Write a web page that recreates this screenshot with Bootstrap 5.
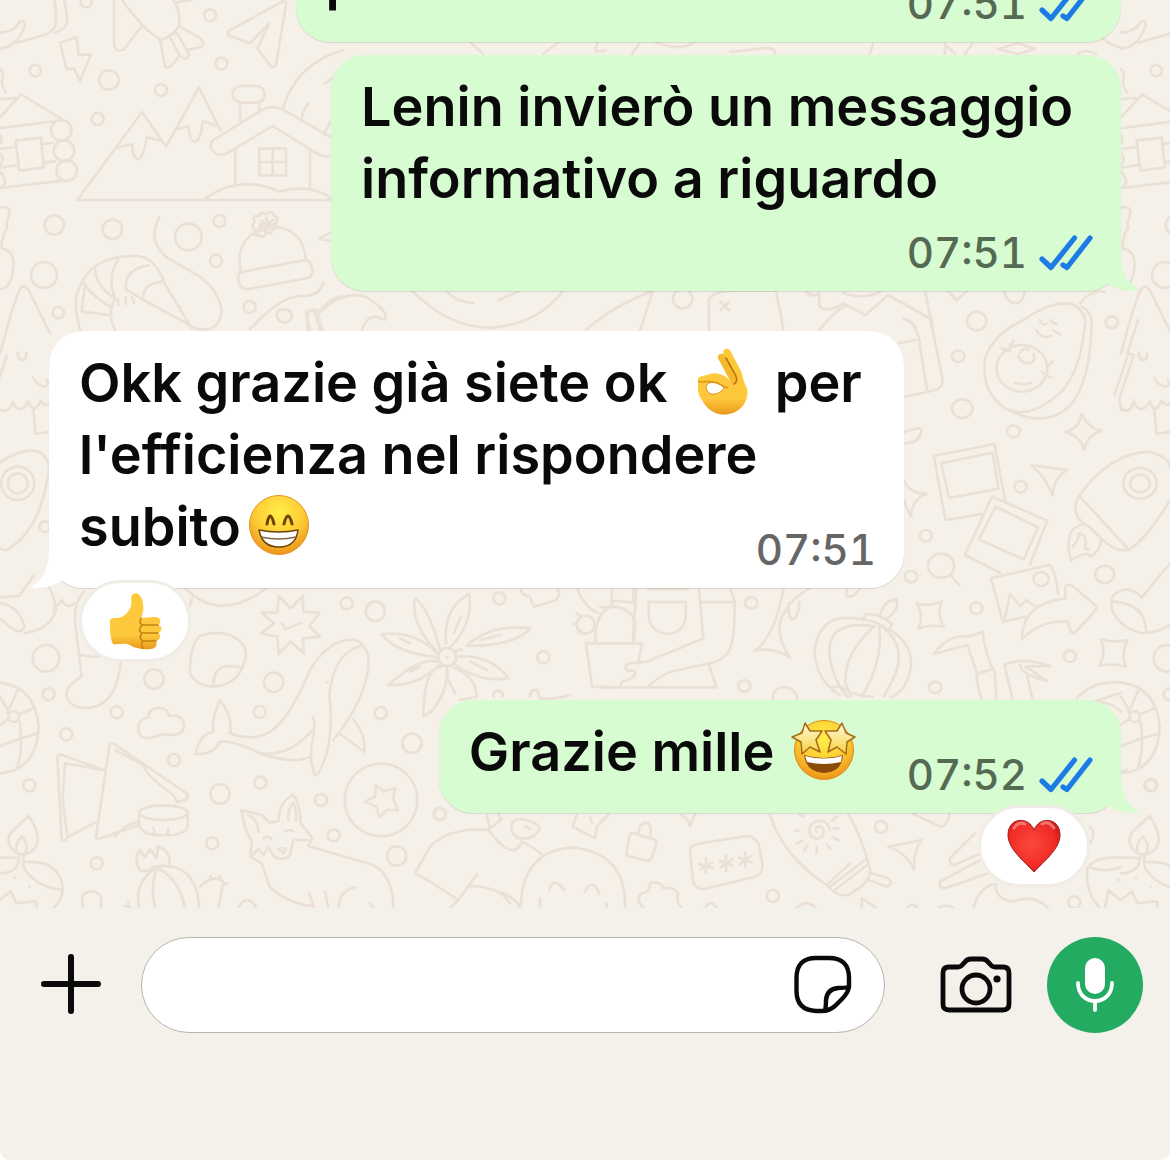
<!DOCTYPE html>
<html lang="it">
<head>
<meta charset="utf-8">
<meta name="viewport" content="width=device-width, initial-scale=1">
<title>Chat</title>
<link href="https://cdn.jsdelivr.net/npm/bootstrap@5.3.0/dist/css/bootstrap.min.css" rel="stylesheet">
<style>
  body { font-family: Inter, "Liberation Sans", sans-serif; background: #fff; color: #0a0a0a; }
  .app-shell { background: #f4f0ea; border-radius: 0 0 10px 10px; height: 100vh; }
  .chat-log { background: #f5f0e8; padding: 0 49px 95px; min-height: 0; }
  .doodles { z-index: 0; fill: none; stroke: #eae0d5; stroke-width: 2.6px; stroke-linecap: round; stroke-linejoin: round; }
  .doodles * { vector-effect: non-scaling-stroke; }
  .bubble { z-index: 1; border-radius: 34px; padding: 16px 28px 13px 30px; box-shadow: 0 1px 1px rgba(60, 50, 40, .14); }
  .bubble-out { background: #d8fcd2; --bubble: #d8fcd2; }
  .bubble-in { background: #fff; --bubble: #fff; }
  .bubble-text { font-size: 54px; line-height: 72px; font-weight: 600; }
  .stamp { font-size: 42px; line-height: 50px; font-weight: 500; font-variant-numeric: tabular-nums; margin-top: -38px; gap: 12px; color: #666; }
  .bubble-out .stamp { color: #566a53; }
  .stamp-below { margin-top: 13px; }
  .stamp-room { width: 237px; }
  .tail { width: 42px; height: 42px; bottom: -1px; fill: var(--bubble); }
  .tail-out { right: -21px; }
  .tail-in { left: -21px; }
  .emoji { width: 68px; height: 68px; vertical-align: -14px; }
  .bubble-text .emoji-inline { margin: 0 4px 0 8px; }
  .reaction { width: 112px; height: 82px; border: 3px solid #f0ece6; z-index: 2; bottom: -74px; }
  .reaction .emoji { width: 60px; height: 60px; }
  .reaction-start { left: 30px; }
  .reaction-end { right: 31px; }
  .w-first { width: 77%; }
  .w-second { width: 790px; max-width: 100%; }
  .w-third { width: 855px; max-width: 100%; }
  .gap-tight { margin-top: 13px; }
  .gap-turn { margin-top: 40px; }
  .gap-reacted { margin-top: 112px; }
  .composer { padding: 29px 27px 127px 39px; }
  .plain-btn { border: 0; background: none; padding: 0; line-height: 0; color: #0a0a0a; }
  .field-wrap { margin-left: 38px; margin-right: 55px; }
  .field { height: 96px; border: 1px solid #b9b6b2; border-radius: 48px; font-size: 42px; padding: 0 110px 0 36px; }
  .sticker-btn { right: 32px; top: 17px; }
  .mic-btn { width: 96px; height: 96px; background: #23ab62; margin-left: 35px; }
</style>
<script src="https://cdn.jsdelivr.net/npm/bootstrap@5.3.0/dist/js/bootstrap.bundle.min.js"></script>
</head>
<body>
<svg width="0" height="0" class="position-absolute" aria-hidden="true">
  <defs>
    <radialGradient id="face" cx=".5" cy=".3" r=".75"><stop offset="0" stop-color="#fff04a"/><stop offset=".55" stop-color="#fdcb33"/><stop offset="1" stop-color="#e98a17"/></radialGradient>
    <linearGradient id="skin" x1="0" y1="0" x2="0" y2="1"><stop offset="0" stop-color="#fdc93a"/><stop offset=".75" stop-color="#fec83d"/><stop offset="1" stop-color="#e89a1c"/></linearGradient>
    <linearGradient id="starfill" x1="0" y1="0" x2="0" y2="1"><stop offset="0" stop-color="#fffbe0"/><stop offset="1" stop-color="#f6cf3c"/></linearGradient>
    <radialGradient id="heartfill" cx=".45" cy=".45" r=".65"><stop offset="0" stop-color="#fb4a3c"/><stop offset=".7" stop-color="#f02a25"/><stop offset="1" stop-color="#b81417"/></radialGradient>
    <symbol id="ticks" viewBox="0 0 54 36"><path d="M3 24l9 8.500L35.500 3M24 30l4 2.500L51 3" fill="none" stroke="#1b7ce5" stroke-width="5.200" stroke-linecap="round" stroke-linejoin="round"/></symbol>
    <symbol id="tail-right" viewBox="0 0 42 42"><path d="M21 0C21 22 27 33 40 40.500C28 42 15 39 7 33L0 16Z"/></symbol>
    <symbol id="tail-left" viewBox="0 0 42 42"><path d="M21 0C21 22 15 33 2 40.500C14 42 27 39 35 33L42 16Z"/></symbol>
  </defs>
</svg>

<div class="app-shell d-flex flex-column overflow-hidden">
  <main class="chat-log position-relative flex-grow-1 d-flex flex-column justify-content-end overflow-hidden">

    <!-- wallpaper doodles -->
    <svg class="doodles position-absolute top-0 start-0 w-100 h-100" viewBox="0 0 1170 908" preserveAspectRatio="xMinYMin slice" aria-hidden="true">
      <g id="edge-doodles">
        <g transform="scale(.33333)">
          <path d="M163 0Q172 40 166 75Q160 97 130 106L52 128M192 0Q206 60 198 75Q190 90 163 98M0 98Q45 95 58 66Q76 58 74 76Q55 140 0 146"/>
          <path d="M0 208Q12 215 8 235Q0 250 18 278M0 352L63 283L190 360L0 385M0 297L45 294M0 447L47 440M124 432L158 429M0 503L52 495M132 487L165 484M0 564L190 542M47 422L122 413L132 502L58 512Z"/>
          <circle cx="184" cy="391" r="31"/><circle cx="192" cy="452" r="31"/><circle cx="200" cy="512" r="31"/>
          <path d="M0 404Q8 420 0 430M0 460Q16 476 0 496M0 515Q18 535 14 550Q8 562 0 563M0 622Q28 618 28 636Q28 650 22 660Q18 670 22 684Q8 700 10 714Q2 725 6 746Q40 750 41 792Q35 868 0 868"/>
          <circle cx="106" cy="212" r="17"/><circle cx="163" cy="675" r="29"/><circle cx="132" cy="825" r="39"/><circle cx="175" cy="938" r="17"/>
        </g>
        <g transform="translate(0 320) scale(.33333)">
          <path d="M28 0L0 100M35 -25L58 -90Q70 -110 86 -90L150 40M35 -25L28 0M54 98Q52 118 68 120Q82 116 78 100M100 172Q108 195 135 200Q150 195 140 178M20 108L-20 225M0 270Q30 280 38 246Q60 290 86 244Q100 290 122 242Q135 262 150 250M100 265L106 342L150 335"/>
        </g>
        <g transform="translate(0 580) scale(.33333)">
          <circle cx="138" cy="235" r="40"/><circle cx="146" cy="343" r="18"/><circle cx="88" cy="616" r="18"/>
          <path d="M0 308Q105 320 116 440Q110 572 0 580M0 350L25 392M56 404L98 386M0 434L24 418M58 424Q72 500 50 568M0 498Q60 475 114 460M22 398L52 332"/><circle cx="41" cy="410" r="16"/>
          <path d="M86 708Q125 765 108 800Q95 820 74 822Q50 824 38 810Q12 780 40 750ZM66 770Q90 800 74 822M66 770Q40 795 52 820M58 824Q58 845 48 862Q30 880 0 880M72 824Q66 848 74 868Q110 922 188 930M76 846Q176 840 188 920Q190 960 160 984M0 832L50 834M0 960L32 934L50 970L108 964L110 984M44 893h1M88 920h1"/>
        </g>
      </g>
      <use href="#edge-doodles" x="1121"/>

      <g transform="translate(0 320) scale(.33333)">
        <path d="M0 428Q70 380 118 396Q160 420 140 490Q110 640 20 690Q5 690 0 684M0 832L58 828L100 768"/>
        <circle cx="53" cy="490" r="50"/><circle cx="53" cy="490" r="30"/><circle cx="134" cy="620" r="16"/>
        <path d="M0 848Q60 860 74 922Q60 955 0 895M74 940Q150 930 168 870Q162 820 140 790"/>
      </g>

      <g transform="scale(.33333)">
        <circle cx="259" cy="5" r="17"/><circle cx="327" cy="240" r="29"/><circle cx="483" cy="270" r="18"/><circle cx="293" cy="357" r="18"/><circle cx="630" cy="46" r="18"/><circle cx="664" cy="191" r="18"/><circle cx="337" cy="688" r="29"/><circle cx="565" cy="711" r="40"/><circle cx="658" cy="663" r="18"/><circle cx="648" cy="782" r="18"/><circle cx="749" cy="921" r="18"/>
        <path d="M180 128L230 112L236 166L274 162L240 242L222 205L200 207Z"/>
        <path d="M342 0V136Q350 158 372 148L424 80M366 0Q430 90 480 118Q505 120 536 80Q545 40 520 0M524 8L575 0M480 118L495 200Q508 212 534 172M508 108L540 168Q560 185 567 164L534 102Q520 98 508 108M540 80L602 115Q622 140 590 144L562 150"/>
        <path d="M684 94L848 4Q860 2 858 14L828 194Q820 208 810 196L772 146L808 70L750 130L684 106Z"/>
        <path d="M232 600L426 336L498 440L597 262L662 392M348 444L396 432Q398 475 414 478Q432 470 440 412L486 424M530 388L566 378Q568 425 586 426Q604 415 608 364L646 376M232 600H996M616 596Q720 520 838 575Q930 550 992 594M706 448V550M930 448V568M640 420L790 328Q818 314 848 328L990 410M818 378L680 460Q645 475 632 440Q632 425 640 420M818 378L950 460Q975 475 992 466M720 362V310M778 332V310M778 446H858V526H778ZM818 446V526M778 486H858"/>
        <rect x="698" y="258" width="96" height="50" rx="25"/>
        <path d="M850 322Q890 190 1030 150M975 250L1000 232M926 310Q908 330 905 355M990 365L972 404M992 698L958 716L992 722"/>
        <path d="M722 816Q700 690 830 682Q910 690 918 780M714 830Q716 818 730 815L915 780Q935 780 938 815Q935 832 920 835L740 868Q716 866 714 830"/>
        <path d="M776 706Q756 708 768 690Q748 682 764 666Q752 646 776 648Q784 630 798 644Q818 626 822 648Q842 654 826 668Q840 686 818 686Q818 706 800 696Q792 718 776 706M785 662L812 684M800 654L794 694M820 660L778 684M780 674H826"/>
        <path d="M478 652Q440 720 500 772L600 830Q665 880 664 940Q655 985 620 988Q580 990 560 970L430 900Q425 850 490 844L575 985M490 840Q460 760 390 768Q270 775 240 860Q215 900 240 988L262 1030M255 850L245 935L325 945M250 850Q280 890 330 920M285 808Q290 860 345 895M355 778Q320 830 345 895M445 796Q370 810 378 868L428 898M345 895Q320 940 345 990M352 896L356 915M376 892L378 912M396 892L402 908M540 920h2"/>
        <path d="M750 988Q840 890 900 888Q960 890 970 848M830 945Q830 928 852 928Q876 930 876 948Q872 968 852 968Q832 964 830 945M918 940Q920 930 942 932L960 988M918 940L930 988M955 940Q990 890 1030 890"/>
      </g>

      <path d="M470 42L483 54M543 54L559 42M598 42Q590 55 606 50M640 42Q635 50 632 54M655 42Q680 52 695 42M730 52L768 48Q775 48 775 54M870 54L873 44M945 54V44L955 54M965 54L972 44M998 49L1018 43L1035 49L1018 54ZM1078 54Q1085 48 1096 54M1100 36Q1108 44 1121 48"/>

      <g transform="translate(0 250) scale(.74617 .33333)">
        <path d="M552 122Q600 230 655 234Q720 225 755 122M600 128Q615 160 635 158M668 150L698 122M785 240Q820 170 875 122L858 240M950 240V150Q955 122 985 122H1040L1050 240M966 155L977 180M977 155L966 180M1080 125Q1090 145 1098 130V170Q1110 190 1130 160L1160 195L1190 135L1250 210M1098 240Q1120 180 1135 165M1130 130Q1160 150 1180 125M1210 205Q1228 220 1228 240M1240 122L1250 240M1270 122L1282 150L1296 122M1345 122Q1350 160 1362 160Q1372 155 1373 125M1448 160Q1460 120 1480 125M412 190V240M412 190Q415 178 425 180L432 240M430 185Q460 120 490 140Q525 190 515 210Q495 180 485 240"/>
        <ellipse cx="915" cy="146" rx="13" ry="29"/><ellipse cx="1309" cy="213" rx="13" ry="28"/><ellipse cx="1490" cy="217" rx="8" ry="18"/>
      </g>

      <g transform="translate(600 320) scale(.36364 .33333)">
        <circle cx="985" cy="109" r="17"/><circle cx="996" cy="266" r="28"/><circle cx="1137" cy="334" r="18"/><circle cx="1157" cy="500" r="17"/><circle cx="896" cy="647" r="17"/><circle cx="855" cy="770" r="17"/><circle cx="1388" cy="763" r="26"/><circle cx="1035" cy="865" r="17"/><circle cx="1292" cy="1009" r="17"/><circle cx="922" cy="1102" r="17"/><circle cx="416" cy="849" r="17"/><circle cx="397" cy="1098" r="17"/>
        <path d="M850 0Q880 40 880 80L900 215M820 70L868 60M910 0L942 180Q942 208 915 212L838 230M838 335Q890 318 884 330Q880 370 838 370M838 485Q850 518 898 522Q860 535 855 588Q840 560 838 540"/>
        <path d="M1165 0Q1085 40 1060 110Q1045 210 1110 262Q1170 300 1240 240Q1320 190 1335 0Q1320 -50 1280 -50Q1230 -50 1165 0M1110 262Q1220 330 1290 260Q1350 190 1352 0Q1345 -30 1325 -40M1200 30Q1215 60 1240 48M1210 0Q1215 20 1230 10M1245 30L1266 44M1238 0Q1245 12 1256 10M1150 108Q1160 135 1185 128Q1200 120 1192 102M1155 98Q1165 80 1180 90M1140 188Q1165 198 1185 188M1105 85L1125 95L1128 75L1138 62M1228 140L1245 125M1215 155Q1230 170 1240 172"/>
        <circle cx="1160" cy="145" r="70"/>
        <path d="M1325 282Q1340 325 1380 332Q1338 345 1332 390Q1318 345 1280 336Q1318 325 1325 282ZM1186 436L1285 450Q1250 470 1244 525Q1225 470 1186 436ZM870 850Q905 862 940 845Q925 880 946 920Q905 912 876 926Q892 885 870 850ZM1378 958Q1415 970 1450 960Q1432 1000 1446 1040Q1408 1028 1374 1038Q1392 1000 1378 958Z"/>
        <path d="M918 408L1085 372L1115 545M918 408L950 600L1050 582M938 430L1080 398L1096 506L960 534ZM1078 530L1230 602L1182 735M1078 530L1003 705L1100 758M1088 560L1205 622L1165 718L1042 658Z"/>
        <path d="M1315 530Q1400 400 1510 395Q1570 410 1568 450M1320 530L1455 690M1315 530Q1290 590 1345 620L1378 655Q1420 700 1455 688Q1500 660 1568 540M1335 612Q1290 620 1290 660Q1285 680 1295 722Q1340 690 1350 710Q1385 680 1375 650M1300 680Q1320 655 1315 640Q1340 645 1335 670Q1330 690 1345 688"/>
        <circle cx="1485" cy="490" r="46"/><circle cx="1485" cy="490" r="27"/>
        <path d="M1480 0L1450 100L1468 105L1430 230Q1425 280 1455 270Q1465 260 1468 240"/>
        <circle cx="938" cy="737" r="36"/><path d="M964 765L988 796M1075 775L1235 735Q1250 740 1260 822M1075 775L1108 905L1170 890M1112 900L1128 822L1155 858L1172 840L1200 862M1280 800Q1290 790 1300 798L1365 858Q1368 868 1355 880L1305 940Q1290 940 1288 905Q1210 900 1160 958Q1160 850 1280 835Z"/><circle cx="1213" cy="777" r="21"/>
        <path d="M1568 730L1490 832Q1450 790 1412 825Q1400 850 1412 880Q1440 930 1495 940Q1540 935 1568 915M1412 845Q1500 850 1502 935"/>
        <path d="M730 882Q770 880 802 912L795 932Q760 900 724 900ZM770 888Q780 840 815 838Q825 865 790 895M720 898Q600 870 590 1000Q595 1080 660 1125M750 918Q620 900 632 1010Q640 1080 680 1130M755 918Q670 1000 675 1090L690 1130M768 920Q780 1020 720 1130M775 920Q850 980 805 1080L780 1130M800 930Q880 990 845 1080Q830 1120 800 1132M640 1115Q630 1098 660 1100Q700 1130 750 1130"/>
        <path d="M918 1002Q960 940 1015 950L1052 935Q1060 1010 1085 1055L1090 1140M918 1002L1010 975L1035 1055Q1035 1090 1050 1140M1035 1062L1080 1048M1112 1035Q1160 1010 1238 1038L1170 1040L1228 1082Q1160 1065 1155 1035M1112 1035L1135 1140M1175 1070L1190 1140"/>
        <path d="M134 846H236V890Q230 940 184 942Q138 935 134 890ZM132 808H242M100 806L90 965M272 806L284 955L130 1025M358 806L372 846H275M370 848Q372 970 350 1000Q330 1025 300 1030L195 1055Q160 1070 130 1102M0 970H116L105 1030M0 1102H320L300 1035M130 1025L80 1030Q60 1045 78 1052Q95 1050 98 1060Q90 1080 60 1085L55 1102M0 862Q95 850 97 920L92 965"/>
        <path d="M505 806Q480 950 426 992Q480 980 522 1014Q480 940 500 890Q530 830 575 806M520 850Q515 885 528 900Q548 890 548 845M680 806Q670 840 700 825L715 806"/>
        <path d="M475 1140Q475 1100 510 1102Q540 1105 542 1140"/>
      </g>

      <g transform="translate(0 580) scale(.33333)">
        <circle cx="462" cy="297" r="29"/><circle cx="350" cy="397" r="18"/><circle cx="199" cy="463" r="18"/><circle cx="522" cy="540" r="18"/><circle cx="821" cy="307" r="29"/><circle cx="779" cy="396" r="18"/><circle cx="1040" cy="70" r="18"/><circle cx="1126" cy="94" r="29"/><circle cx="1142" cy="399" r="18"/><circle cx="1236" cy="490" r="29"/><circle cx="660" cy="642" r="29"/><circle cx="781" cy="608" r="18"/><circle cx="963" cy="660" r="18"/><circle cx="1001" cy="766" r="18"/><circle cx="1190" cy="828" r="29"/><circle cx="1320" cy="702" r="18"/><circle cx="637" cy="790" r="18"/><circle cx="290" cy="850" r="18"/><circle cx="1143" cy="660" r="109"/>
        <path d="M250 984Q235 935 275 934Q315 940 300 984M715 984Q740 935 770 984"/>
        <path d="M160 90L185 60Q200 90 225 70M250 35Q215 80 228 150L245 290Q190 320 202 355Q220 395 285 380Q350 360 362 250M238 225Q290 235 300 225M570 75L576 55M555 24Q660 130 800 24"/>
        <path d="M598 170Q640 150 690 165Q735 185 738 220Q735 260 710 290Q680 320 640 320Q590 318 570 280Q568 200 598 170M640 320Q640 260 685 258L728 262"/>
        <path d="M836 48L872 85L908 48L910 95L958 98L928 138L960 170L908 175L912 220L872 185L836 222L832 170L784 160L822 130L784 98L832 98ZM845 128L855 148L905 128"/>
        <path d="M586 522Q600 460 640 456Q635 410 660 362Q700 410 690 460Q740 480 790 466Q860 440 930 270Q990 170 1070 180Q1120 210 1100 290Q1080 380 1000 480M586 522Q640 525 660 485Q700 480 780 520Q880 555 930 530M780 520Q870 530 938 450M938 410Q950 430 938 480Q925 540 945 585Q960 585 980 520Q1000 440 988 345Q1000 220 1082 198M1060 418Q1100 470 1092 515Q1060 490 1020 462M982 308h1"/>
        <path d="M418 462Q405 420 445 412Q445 385 478 384Q505 385 508 408Q545 400 552 435Q550 470 505 464Q490 460 460 472Q430 480 418 462"/>
        <path d="M172 530Q175 522 185 524L310 570L195 550L188 660L202 770Q200 785 185 780L172 530M290 725L202 772M328 498Q332 486 345 494L560 640Q570 650 555 660L530 666L520 645Q440 590 430 555L345 510M328 498L288 770Q290 778 302 775L418 735M345 770Q370 735 415 725"/>
        <ellipse cx="490" cy="698" rx="73" ry="22"/><path d="M417 700V735Q430 768 480 765Q560 770 563 735V700M460 745L465 762M505 745L503 762"/>
        <path d="M420 870Q400 840 418 810L436 832L450 808L470 835L474 798Q515 815 508 855M420 870Q440 880 460 860Q590 840 598 984M465 865Q400 910 418 984M470 865Q450 920 465 984M475 865Q540 900 555 984M600 920Q640 880 670 905L655 984M632 888V896M660 888V896M670 914L682 910M372 978L395 984M385 968V984"/>
        <path d="M725 690L785 705L808 728L835 722Q840 660 880 645Q900 670 902 730L938 775L925 798L1120 855Q1180 890 1180 984M725 690Q735 760 755 780L752 830L785 850L808 918Q860 970 935 978M745 705Q775 720 775 755M865 720Q865 680 880 668Q890 690 888 722M755 830L775 805L790 825L805 800L822 830Q850 845 870 825L880 780L925 780M790 775Q805 765 815 778M855 755Q870 745 880 755M835 808Q855 800 858 808L850 820ZM928 940L942 984M975 935L985 984M1015 984Q1020 930 1065 922M1120 984L1110 970"/>
        <path d="M1128 616L1150 634L1185 625L1180 655L1194 690L1160 690L1138 712L1128 680L1095 665L1125 650Z"/>
      </g>

      <g transform="translate(430 580) scale(.33333)">
        <circle cx="208" cy="55" r="18"/><circle cx="340" cy="232" r="18"/><circle cx="52" cy="231" r="27"/><circle cx="29" cy="702" r="18"/><circle cx="1028" cy="948" r="18"/><circle cx="467" cy="134" r="27"/>
        <path d="M48 190Q40 80 118 42Q130 130 62 200M110 198Q180 130 302 145Q250 200 110 198M76 230Q180 220 235 295Q150 310 70 250M65 260Q140 290 140 350L90 360M52 262Q60 320 0 400M25 245Q-30 230 -125 315Q-40 320 30 255M40 258Q-20 260 -20 410Q50 370 52 262M30 210Q0 90 -45 55Q-60 130 20 215M25 225Q-40 150 -145 163Q-100 220 25 232M72 160L92 110M150 180L210 165M120 245L170 270M50 290L75 340M-60 190L-90 175M-60 275L-30 260M50 231h1M75 215L95 208"/>
        <path d="M272 30Q280 50 298 48L312 80L380 60Q392 40 382 24M442 24Q460 80 502 98M545 24V75M610 24V68L548 62M190 350Q190 330 205 332Q220 335 218 350M300 350Q300 325 322 330L330 355Q370 360 420 345M468 190L486 320L570 322M440 100L452 108M432 132H440M445 160L455 152M468 190H515M495 190Q495 80 560 78"/>
        <path d="M0 800Q60 740 175 750Q250 850 275 785Q310 800 340 828M0 800L-45 880L0 905M170 705L180 745L215 718L205 702M245 735Q250 710 290 720Q330 730 328 750Q310 780 265 775Q240 760 245 735M285 740L300 746M440 705L428 740L495 775L500 740L535 705M480 712L486 728M0 905L85 960L142 882M85 960L60 984M122 918Q210 920 240 970M205 935Q245 945 270 980M272 984Q275 810 430 803Q590 820 585 984M358 930Q370 885 402 930M465 935Q485 890 508 940M330 955V984M530 970V984M755 705Q775 715 780 738L795 702"/>
        <path d="M598 768Q600 758 612 760L670 778Q682 780 678 792L665 835Q660 844 648 842L595 828Q588 824 590 815ZM625 762Q628 728 650 728Q668 735 660 775"/>
        <path d="M780 820Q778 798 800 792L950 768Q980 770 988 800L998 860Q995 885 970 892L820 928Q795 925 790 905ZM828 835V880M808 852L848 864M812 868L846 848M888 826V872M868 842L908 856M872 862L906 838M945 818V862M925 832L965 848M928 854L962 828"/>
        <path d="M640 984Q615 955 635 940Q660 940 660 910Q690 900 700 925Q730 920 745 940Q735 965 755 984M1020 705Q1060 830 1190 915M825 984Q840 955 860 984M1100 984Q1130 955 1158 984M1190 915L1260 850M1190 915Q1220 950 1250 945"/>
        <path d="M1160 755Q1150 745 1168 738Q1188 745 1178 768Q1160 785 1142 768Q1130 740 1155 725Q1190 715 1200 750M1120 710L1110 704M1108 752H1095M1118 782L1100 790M1132 796L1122 812M1160 802V818M1192 794L1202 808M1208 772L1225 780M1210 745H1225M1205 722L1220 710"/>
      </g>

      <g transform="translate(780 680) scale(.33333)">
        <circle cx="303" cy="441" r="18"/><circle cx="883" cy="667" r="18"/><circle cx="1114" cy="315" r="18"/>
        <path d="M205 402Q250 480 270 570Q272 610 205 645M150 620L255 540M165 630L262 555M275 580L325 595Q340 612 322 620L265 600M222 632L240 622M325 500L425 480Q400 510 402 568Q375 515 325 500M400 402L482 440Q500 440 508 404M585 460L510 535Q505 555 525 555L600 520M600 540L480 605Q475 625 495 625L625 580M580 684Q600 615 650 612M645 615Q650 660 700 665Q760 640 805 684M245 684L246 655L290 684M380 684Q400 665 412 684M475 684Q500 670 520 684M930 440Q950 460 930 490"/>
        <path d="M890 55Q940 0 1023 8M905 75Q960 60 1023 38M960 65Q1000 70 1023 95M1023 532Q950 530 925 560Q970 580 1023 562M922 565Q915 640 960 684M975 684L985 632L1023 660M1016 600h1M1023 275L1040 270"/>
      </g>
    </svg>

    <article class="bubble bubble-out w-first position-relative align-self-end d-flex flex-column flex-shrink-0">
      <div class="bubble-text">presenza</div>
      <div class="stamp d-flex align-items-center align-self-end"><time>07:51</time><svg width="54" height="36" role="img" aria-label="Letto"><use href="#ticks"/></svg></div>
    </article>

    <article class="bubble bubble-out w-second gap-tight position-relative align-self-end d-flex flex-column flex-shrink-0">
      <div class="bubble-text">Lenin invierò un messaggio informativo a riguardo</div>
      <div class="stamp stamp-below d-flex align-items-center align-self-end"><time>07:51</time><svg width="54" height="36" role="img" aria-label="Letto"><use href="#ticks"/></svg></div>
      <svg class="tail tail-out position-absolute" aria-hidden="true"><use href="#tail-right"/></svg>
    </article>

    <article class="bubble bubble-in w-third gap-turn position-relative align-self-start d-flex flex-column flex-shrink-0">
      <svg class="tail tail-in position-absolute" aria-hidden="true"><use href="#tail-left"/></svg>
      <div class="bubble-text">Okk grazie già siete ok
        <svg class="emoji emoji-inline" viewBox="0 0 68 68" role="img" aria-label="OK">
          <path d="M9 33C8 27 17 28 21 26C31 23 40 30 42 35L29 10C28 6 34 4 36 8L34 5C34 0 40-1 42 4L52 23C54 29 54 32 57 38C62 48 54 64 40 66C28 69 17 61 13 52C8 46 9 38 9 33Z" fill="url(#skin)"/>
          <path d="M29 10C28 6 34 4 36 8L47 29C49 34 47 37 44 37Z" fill="#f5b92c"/>
          <path d="M37 10L47 28Q49 34 45 36" fill="none" stroke="#b87310" stroke-width="1.600" stroke-linecap="round"/>
          <path d="M20 35C15 37 17 44 22 46C28 47 34 43 35 40C33 37 27 33 20 35Z" fill="#fff" stroke="#d88f16" stroke-width="1"/>
          <path d="M9 33C13 36 17 32 23 34C29 33 33 39 39 40" fill="none" stroke="#dd9417" stroke-width="1.500"/>
        </svg>
        per l'efficienza nel rispondere subito<svg class="emoji" viewBox="0 0 68 68" role="img" aria-label="Sorriso">
          <circle cx="38" cy="33" r="29.500" fill="url(#face)" stroke="#e29420" stroke-width="1"/>
          <path d="M26 32Q29 16 33 32M43 32Q47 16 51 32" fill="none" stroke="#6f4305" stroke-width="3" stroke-linecap="round"/>
          <path d="M18 38Q38 42 57 38Q55 55 38 55Q21 55 18 38Z" fill="#fff" stroke="#6b420c" stroke-width="1.500" stroke-linejoin="round"/>
          <path d="M20 45Q38 49 55 45" fill="none" stroke="#80654b" stroke-width="1.500"/>
        </svg></div>
      <div class="stamp align-self-end"><time>07:51</time></div>
      <button type="button" class="reaction reaction-start btn bg-white rounded-pill p-0 position-absolute d-flex align-items-center justify-content-center" aria-label="Reazione pollice in su">
        <svg class="emoji" viewBox="0 0 60 60">
          <path d="M5 32C4 29 6 27 9 27C18 28 23 22 26 15C27 9 25 5 28 3C33 0 37 6 38 12C39 18 38 23 36 27L50 26C56 26 57 32 53 34C58 35 57 41 53 42C57 44 55 49 51 50C53 54 50 58 46 58C38 59 29 57 25 54C20 51 13 54 8 53C5 47 5 39 5 32Z" fill="url(#skin)"/>
          <path d="M36 27Q34 33 37 34H53M37 34Q32 40 37 42H53M37 42Q33 48 38 50H51M38 50Q35 54 38 57" fill="none" stroke="#c8800f" stroke-width="1.600" stroke-linecap="round"/>
        </svg>
      </button>
    </article>

    <article class="bubble bubble-out gap-reacted position-relative align-self-end d-flex flex-column flex-shrink-0">
      <div class="bubble-text">Grazie mille
        <svg class="emoji" viewBox="0 0 68 68" role="img" aria-label="Occhi a stella">
          <circle cx="36" cy="33" r="29.500" fill="url(#face)" stroke="#e08c18" stroke-width="1"/>
          <path d="M16 38Q36 44 55 38Q54 55 36 56Q18 55 16 38Z" fill="#8a4a08"/>
          <path d="M17 39Q36 44 54 39L53 45Q36 49 19 45Z" fill="#fff"/>
          <path d="M17 6L22 14L34 14L28 23L32 35L22 30L14 37L13 25L4 20L14 16ZM54 6L49 14L37 14L43 23L40 35L49 30L58 37L59 25L67 20L58 16Z" fill="url(#starfill)" stroke="#a8691a" stroke-width="1.500" stroke-linejoin="round"/>
        </svg><span class="stamp-room d-inline-block"></span></div>
      <div class="stamp d-flex align-items-center align-self-end"><time>07:52</time><svg width="54" height="36" role="img" aria-label="Letto"><use href="#ticks"/></svg></div>
      <svg class="tail tail-out position-absolute" aria-hidden="true"><use href="#tail-right"/></svg>
      <button type="button" class="reaction reaction-end btn bg-white rounded-pill p-0 position-absolute d-flex align-items-center justify-content-center" aria-label="Reazione cuore">
        <svg class="emoji" viewBox="0 0 60 60">
          <path d="M30 56C20 45 4 33 4 19C4 1 25 0 30 14C35 0 56 1 56 19C56 33 40 45 30 56Z" fill="url(#heartfill)" stroke="#9e1a18" stroke-width="1"/>
          <path d="M10 12Q14 5 21 8M38 8Q44 4 50 12" fill="none" stroke="#ffb5ac" stroke-width="3" stroke-linecap="round" opacity=".55"/>
        </svg>
      </button>
    </article>
  </main>

  <form class="composer d-flex align-items-center flex-shrink-0">
    <button type="button" class="plain-btn flex-shrink-0" aria-label="Allega">
      <svg width="64" height="64" viewBox="0 0 64 64"><path d="M5 31H59M32 4V58" stroke="currentColor" stroke-width="6" stroke-linecap="round"/></svg>
    </button>
    <div class="field-wrap position-relative flex-grow-1">
      <input type="text" class="field form-control bg-white" aria-label="Messaggio">
      <button type="button" class="sticker-btn plain-btn position-absolute" aria-label="Adesivi">
        <svg width="60" height="60" viewBox="0 0 60 60" fill="none" stroke="currentColor" stroke-width="4.400" stroke-linejoin="round"><path d="M23 4H36Q56 4 56 24V33Q55 39 49 45L42 52Q36 57 29 57H23Q3.500 56 3.500 37V24Q3.500 4 23 4ZM32 56Q33 53 33 46Q34 35 45 34Q52 34 55 33"/></svg>
      </button>
    </div>
    <button type="button" class="plain-btn flex-shrink-0" aria-label="Fotocamera">
      <svg width="72" height="60" viewBox="0 0 72 60" fill="none" stroke="currentColor" stroke-width="4.800" stroke-linejoin="round"><path d="M9 12H18Q21 12 23 9L25 7Q27 4 31 4H42Q46 4 48 7L50 9Q52 12 55 12H63Q69 12 69 18V49Q69 55 63 55H9Q3 55 3 49V18Q3 12 9 12Z"/><circle cx="36" cy="34" r="14"/><circle cx="57" cy="24" r="3.600" fill="currentColor" stroke="none"/></svg>
    </button>
    <button type="button" class="mic-btn btn rounded-circle border-0 p-0 flex-shrink-0" aria-label="Messaggio vocale">
      <svg width="40" height="58" viewBox="0 0 40 58"><rect x="10" y="2" width="20" height="36" rx="10" fill="#fff"/><path d="M3 27C3 51 37 51 37 27M20 45V54" fill="none" stroke="#fff" stroke-width="3.800" stroke-linecap="round"/></svg>
    </button>
  </form>
</div>
</body>
</html>
